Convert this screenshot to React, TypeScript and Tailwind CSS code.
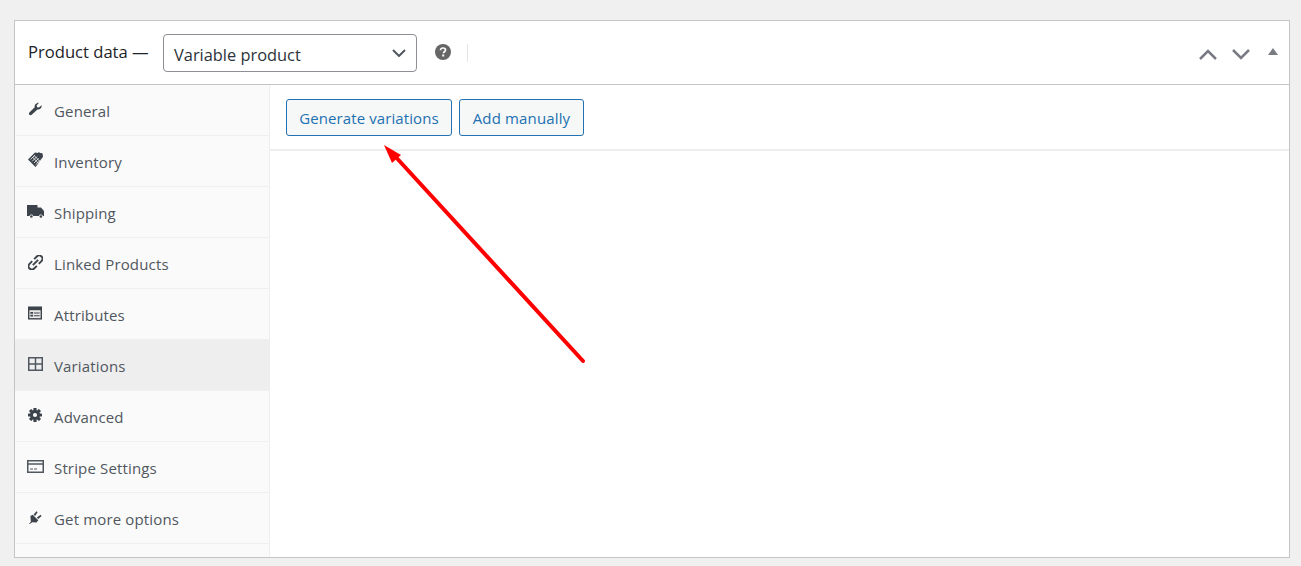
import React from "react";

function Wrench() {
  return (
    <svg width="14" height="14" viewBox="0 0 16 16" fill="#3c434a">
      <path d="M15.500 3.600c.3 1.500-.1 2.900-1.200 3.900-1 1-2.300 1.300-3.500 1L4.200 14.700c-.7.700-1.900.700-2.600 0s-.7-1.900 0-2.600L7.700 6c-.3-1.300 0-2.600 1-3.600C9.700 1.400 11.100.5 12.500.8L9.900 3.900l.5 2 2 .5L15.500 3.600z" />
    </svg>
  );
}
function Tag() {
  return (
    <svg width="16" height="16" viewBox="0 0 16 16">
      <path d="M0 7.500 7 .5l3 .6.8-1 1.400 1 2.300.2.500 3.500L8 14.500 7.500 15z" fill="#3c434a" />
      <path d="M2.500 7.500 7 3M4.200 9.300 8.800 4.700M6 11 10.600 6.400M7.700 12.700 12.300 8.100M4.500 5l6 6.300M6.300 3.600l6 6.300" stroke="#fafafa" strokeWidth="0.8" />
    </svg>
  );
}
function Truck() {
  return (
    <svg className="-ml-px" width="17" height="13" viewBox="0 0 17 13" fill="#3c434a">
      <path d="M0 0h10.500v2.500H14l3 3.500v5h-1.200a2 2 0 0 0-3.800 0H6.300a2 2 0 0 0-3.800 0H0z" />
      <circle cx="4.400" cy="11.500" r="1.300" />
      <circle cx="13.900" cy="11.500" r="1.300" />
    </svg>
  );
}
function LinkIcon() {
  return (
    <svg width="15" height="15" viewBox="0 0 16 16" fill="none" stroke="#3c434a" strokeWidth="2">
      <g transform="rotate(-45 8 8)">
        <path d="M6.500 4.500H2.500a3.500 3.500 0 0 0 0 7h4" />
        <path d="M9.500 4.500h4a3.500 3.500 0 0 1 0 7h-4" />
        <path d="M4 8h8" />
      </g>
    </svg>
  );
}
function Attr() {
  return (
    <svg width="14" height="14" viewBox="0 0 15 14">
      <path d="M0 0h15v14H0z" fill="#3c434a" />
      <path d="M1.500 4h12v8.500h-12z" fill="#e8e8e8" />
      <path d="M2.500 6h3v1.700h-3zM2.500 9h3v1.700h-3zM6.500 6.500h6v1h-6zM6.500 9.500h6v1h-6z" fill="#3c434a" />
    </svg>
  );
}
function Grid() {
  return (
    <svg width="15" height="14" viewBox="0 0 15 14" fill="none" stroke="#50575e" strokeWidth="1.500">
      <path d="M.75.75h13.500v12.500H.75zM7.500.75v12.500M.75 7h13.500" />
    </svg>
  );
}
function Gear() {
  const teeth = [0, 45, 90, 135];
  return (
    <svg width="14" height="14" viewBox="0 0 14 14" fill="#3c434a">
      {teeth.map((a) => (
        <rect key={a} x="5.400" y="0" width="3.200" height="14" rx="0.500" transform={`rotate(${a} 7 7)`} />
      ))}
      <circle cx="7" cy="7" r="5" />
      <circle cx="7" cy="7" r="2.100" fill="#fafafa" />
    </svg>
  );
}
function Card() {
  return (
    <svg className="-ml-px" width="17" height="13" viewBox="0 0 17 13" fill="none">
      <path d="M.75.75h15.500v11.500H.75z" stroke="#50575e" strokeWidth="1.500" />
      <path d="M1 4h15" stroke="#50575e" strokeWidth="1.500" />
      <path d="M3 9h3M7 9h3" stroke="#50575e" strokeWidth="1.200" />
    </svg>
  );
}
function Plug() {
  return (
    <svg className="ml-px" width="13" height="13" viewBox="0 0 14 14" fill="#3c434a">
      <path d="M0 14 2 11.500 1.500 5.500 4 4l6 6-2 2.500-4.500-.5L.8 14z" />
      <path d="M5 3.800 8 .3l1.300 1L6.500 5.300zM8.500 7 12.500 4l1 1.300L10 8.500z" />
    </svg>
  );
}

const tabs: [string, React.ReactNode][] = [
  ["General", <Wrench />],
  ["Inventory", <Tag />],
  ["Shipping", <Truck />],
  ["Linked Products", <LinkIcon />],
  ["Attributes", <Attr />],
  ["Variations", <Grid />],
  ["Advanced", <Gear />],
  ["Stripe Settings", <Card />],
  ["Get more options", <Plug />],
];

export default function App() {
  return (
    <div className="h-[566px] bg-[#f0f0f1] pt-5 px-[14px] overflow-hidden font-['Open_Sans','Noto_Sans',sans-serif] relative">
      <div className="w-[1276px] h-[538px] bg-white border border-[#c3c4c7] flex flex-col">
        <div className="h-[64px] border-b border-[#c3c4c7] flex items-center shrink-0 pl-[13px] pr-[11px]">
          <span className="text-[16.600px] leading-5 text-[#1d2327] -mt-[1px] w-[122px] whitespace-nowrap">Product data —</span>
          <div className="ml-[13px] mt-[1px] w-[254px] h-[38px] border border-[#8c8f94] rounded-[4px] flex items-center justify-between pl-[10px] pr-[10px] text-[#2c3338]">
            <span className="text-[16.400px] leading-6 mt-[4px]">Variable product</span>
            <svg width="14" height="8" viewBox="0 0 14 8" fill="none" stroke="#50575e" strokeWidth="2">
              <path d="M1 1l6 6 6-6" />
            </svg>
          </div>
          <svg className="ml-[18px] -mt-[2px]" width="16" height="16" viewBox="0 0 16 16">
            <circle cx="8" cy="8" r="8" fill="#666" />
            <path d="M5.500 6.200C5.600 4.700 6.600 4 8 4c1.500 0 2.500.8 2.500 2 0 1.700-2 1.700-2 3.200" fill="none" stroke="#fff" strokeWidth="1.700" />
            <rect x="7.200" y="10.500" width="2" height="2" fill="#fff" />
          </svg>
          <div className="ml-4 w-px h-[18px] bg-[#e5e5e5]" />
          <div className="ml-auto flex items-center">
            <svg width="18" height="11" viewBox="0 0 18 11" fill="none" stroke="#787c82" strokeWidth="2.500" className="mt-[3px]">
              <path d="M1 10l8-8 8 8" />
            </svg>
            <svg className="ml-[15px] mt-[3px]" width="18" height="11" viewBox="0 0 18 11" fill="none" stroke="#787c82" strokeWidth="2.500">
              <path d="M1 1l8 8 8-8" />
            </svg>
            <svg className="ml-[18px] -mt-[2px]" width="10" height="7" viewBox="0 0 10 7" fill="#787c82">
              <path d="M5 0l5 7H0z" />
            </svg>
          </div>
        </div>
        <div className="flex-1 flex min-h-0">
          <div className="w-[255px] shrink-0 bg-[#fafafa] border-r border-[#eeeeee]">
            {tabs.map(([name, icon]) => (
              <div
                key={name}
                className={`h-[51px] flex items-center border-b border-[#f0f0f1] ${name === "Variations" ? "bg-[#eeeeee]" : ""}`}
              >
                <span className="w-[39px] pl-[13px] flex justify-start -mt-[2px]">{icon}</span>
                <span className="text-[15px] leading-5 text-[#50575e] tracking-[0.15px] mt-[2px]">{name}</span>
              </div>
            ))}
          </div>
          <div className="flex-1">
            <div className="h-[66px] border-b-2 border-[#eeeeee] flex gap-[7px] pl-4 pt-[14px]">
              <button className="h-[37px] w-[166px] bg-[#f6f7f7] border border-[#2271b1] rounded-[3px] text-[#2271b1] text-[15px] leading-5 tracking-[0.1px]">
                Generate variations
              </button>
              <button className="h-[37px] w-[125px] bg-[#f6f7f7] border border-[#2271b1] rounded-[3px] text-[#2271b1] text-[15px] leading-5 tracking-[0.15px]">
                Add manually
              </button>
            </div>
          </div>
        </div>
      </div>
      <svg className="absolute left-0 top-0 pointer-events-none" width="1301" height="566" viewBox="0 0 1301 566">
        <path d="M583 361 393 154" stroke="#ff0000" strokeWidth="4" strokeLinecap="round" fill="none" />
        <path d="M384 145 401 155 392 163z" fill="#ff0000" />
      </svg>
    </div>
  );
}
